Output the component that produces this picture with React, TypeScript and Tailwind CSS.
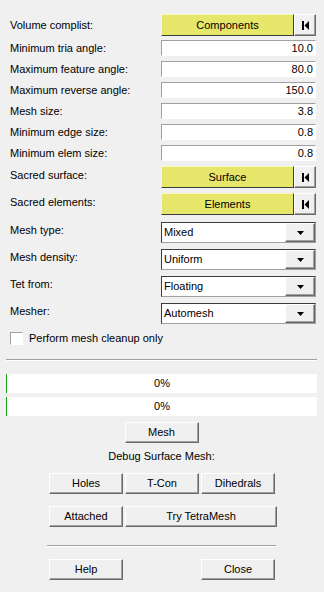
import React from "react";

const raised =
  "border border-t-white border-l-white border-r-[#696969] border-b-[#696969] shadow-[inset_-1px_-1px_0_#a0a0a0] bg-[#f0f0f0]";

function FirstIcon() {
  return (
    <svg width="9" height="9" viewBox="0 0 9 9">
      <rect x="1" y="0" width="2" height="9" fill="#000" />
      <polygon points="8,0 8,9 3.5,4.5" fill="#000" />
    </svg>
  );
}

function PickRow({ label, value, labelUp }: { label: string; value: string; labelUp?: boolean }) {
  return (
    <div className="flex h-[22px]">
      <div className={`w-[151px] flex ${labelUp ? "items-start pt-[1px]" : "items-center"}`}>{label}</div>
      <button className="w-[133px] h-[22px] bg-[#e6e66b] border border-t-[#f8f8c0] border-l-[#f8f8c0] border-r-[#3c3c3c] border-b-[#3c3c3c] flex items-center justify-center">
        {value}
      </button>
      <button className={`w-[22px] h-[22px] flex items-center justify-center ${raised}`}>
        <FirstIcon />
      </button>
    </div>
  );
}

function InputRow({ label, value }: { label: string; value: string }) {
  return (
    <div className="flex h-[16px] items-center">
      <div className="w-[151px]">{label}</div>
      <div className="w-[155px] h-[16px] bg-white border border-t-[#a0a0a0] border-l-[#a0a0a0] border-r-white border-b-white flex items-center justify-end pr-[2px]">
        {value}
      </div>
    </div>
  );
}

function SelectRow({ label, value }: { label: string; value: string }) {
  return (
    <div className="flex h-[21px]">
      <div className="w-[151px] flex items-center pb-[4px]">{label}</div>
      <div className="w-[155px] h-[21px] bg-white border border-t-[#3c3c3c] border-l-[#3c3c3c] border-r-[#a0a0a0] border-b-[#a0a0a0] flex items-center">
        <div className="flex-1 pl-[2px]">{value}</div>
        <div className={`w-[30px] h-[19px] flex items-center justify-center ${raised}`}>
          <svg width="7" height="4" viewBox="0 0 7 4">
            <polygon points="0,0 7,0 3.5,4" fill="#000" />
          </svg>
        </div>
      </div>
    </div>
  );
}

function Btn({ children, w = "w-[74px]" }: { children: React.ReactNode; w?: string }) {
  return <button className={`${w} h-[21px] flex items-center justify-center ${raised}`}>{children}</button>;
}

function Progress() {
  return (
    <div className="h-[19px] bg-white border-l border-l-[#16a016] flex items-center justify-center">0%</div>
  );
}

export default function App() {
  return (
    <div
      className="w-[324px] h-[592px] bg-[#f0f0f0] text-black text-[11px] overflow-hidden"
      style={{ fontFamily: '"Liberation Sans", Arial, sans-serif' }}
    >
      <div className="pl-[10px] pt-[14px] flex flex-col">
        <PickRow label="Volume complist:" value="Components" />
        <div className="flex flex-col gap-[5px] mt-[4px]">
          <InputRow label="Minimum tria angle:" value="10.0" />
          <InputRow label="Maximum feature angle:" value="80.0" />
          <InputRow label="Maximum reverse angle:" value="150.0" />
          <InputRow label="Mesh size:" value="3.8" />
          <InputRow label="Minimum edge size:" value="0.8" />
          <InputRow label="Minimum elem size:" value="0.8" />
        </div>
        <div className="flex flex-col gap-[5px] mt-[5px]">
          <PickRow label="Sacred surface:" value="Surface" labelUp />
          <PickRow label="Sacred elements:" value="Elements" labelUp />
        </div>
        <div className="flex flex-col gap-[6px] mt-[7px]">
          <SelectRow label="Mesh type:" value="Mixed" />
          <SelectRow label="Mesh density:" value="Uniform" />
          <SelectRow label="Tet from:" value="Floating" />
          <SelectRow label="Mesher:" value="Automesh" />
        </div>
        <div className="flex items-center gap-[6px] mt-[6px]">
          <div className="w-[13px] h-[13px] bg-white border border-t-[#a0a0a0] border-l-[#a0a0a0] border-r-white border-b-white" />
          <span>Perform mesh cleanup only</span>
        </div>
      </div>
      <div className="mx-[6px] mt-[12px] h-[2px] border-t border-t-[#a0a0a0] border-b border-b-white w-[311px]" />
      <div className="mx-[6px] mt-[13px] flex flex-col gap-[4px] w-[311px]">
        <Progress />
        <Progress />
      </div>
      <div className="flex justify-center mt-[6px] pr-[1px]">
        <Btn>Mesh</Btn>
      </div>
      <div className="text-center mt-[5px] pr-[1px]">Debug Surface Mesh:</div>
      <div className="pl-[49px] flex flex-col gap-[12px] mt-[9px]">
        <div className="flex gap-[2px]">
          <Btn>Holes</Btn>
          <Btn>T-Con</Btn>
          <Btn>Dihedrals</Btn>
        </div>
        <div className="flex gap-[2px]">
          <Btn>Attached</Btn>
          <Btn w="w-[152px]">Try TetraMesh</Btn>
        </div>
      </div>
      <div className="ml-[47px] mt-[18px] w-[229px] h-[2px] border-t border-t-[#a0a0a0] border-b border-b-white" />
      <div className="pl-[49px] pr-[49px] flex justify-between mt-[12px]">
        <Btn>Help</Btn>
        <Btn>Close</Btn>
      </div>
    </div>
  );
}
